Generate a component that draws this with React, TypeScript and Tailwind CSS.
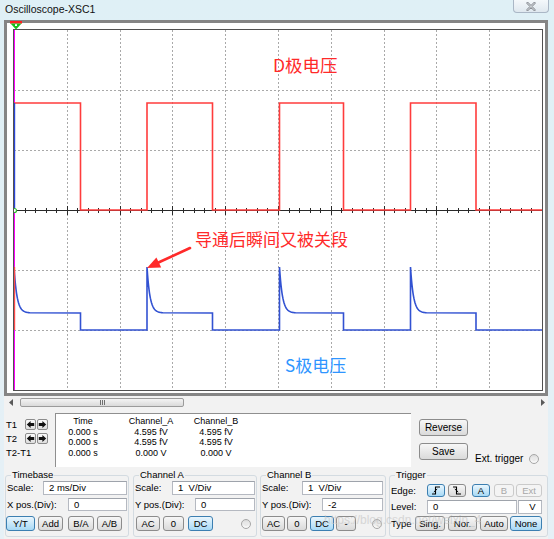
import React from "react";

type BtnProps = { children?: React.ReactNode; className?: string; variant?: "normal" | "active" | "disabled" };

function Btn({ children, className = "", variant = "normal" }: BtnProps) {
  const v =
    variant === "active"
      ? "border-[#3c7fb1] bg-linear-to-b from-[#eaf6fd] to-[#a7d9f5] text-black"
      : variant === "disabled"
      ? "border-[#cacaca] bg-[#f4f4f4] text-[#a8a8a8]"
      : "border-[#8c8c8c] bg-linear-to-b from-[#f7f7f7] to-[#dadada] text-black";
  return (
    <div className={`flex shrink-0 items-center justify-center rounded-[3px] border text-[9.5px] leading-none ${v} ${className}`}>
      {children}
    </div>
  );
}

function Field({ value, className = "" }: { value: string; className?: string }) {
  return (
    <div className={`flex shrink-0 items-center border border-[#b5b9c1] border-t-[#9ea3ab] bg-white pl-[5px] text-[9.5px] leading-none text-black ${className}`}>
      {value}
    </div>
  );
}

function Radio({ className = "" }: { className?: string }) {
  return (
    <div className={`flex h-[10px] w-[10px] shrink-0 items-center justify-center rounded-full border border-[#a6a6a6] bg-linear-to-b from-[#dcdcdc] to-[#fbfbfb] ${className}`}>
      <div className="h-[4px] w-[4px] rounded-full bg-[#e9e9e9]" />
    </div>
  );
}

function ArrowBtn({ dir }: { dir: "l" | "r" }) {
  return (
    <div className="flex h-[11px] w-[11px] items-center justify-center rounded-[2px] border border-[#8c8c8c] bg-linear-to-b from-[#fafafa] to-[#dedede]">
      <svg width="9" height="9" viewBox="0 0 9 9">
        {dir === "l" ? (
          <path d="M0.8 4.5 L4.6 0.9 L4.6 3.1 L8.2 3.1 L8.2 5.9 L4.6 5.9 L4.6 8.1 Z" fill="#111" />
        ) : (
          <path d="M8.2 4.5 L4.4 0.9 L4.4 3.1 L0.8 3.1 L0.8 5.9 L4.4 5.9 L4.4 8.1 Z" fill="#111" />
        )}
      </svg>
    </div>
  );
}

function bluePath() {
  const rises = [0, 133, 265.5, 396.5];
  const falls = [66.5, 198.5, 329.5, 462];
  let d = "";
  rises.forEach((r, i) => {
    if (i === 0) d += `M${r},237`;
    else d += ` L${r},300 L${r},237`;
    for (let t = 0.5; t <= 16; t += 0.5) d += ` L${(r + t).toFixed(2)},${(283 - 46 * Math.exp(-t / 3)).toFixed(2)}`;
    d += ` L${falls[i]},283 L${falls[i]},300`;
  });
  d += " L528,300";
  return d;
}

const redPath =
  "M0,73 H66.5 V180 H133 V73 H198.5 V180 H265.5 V73 H329.5 V180 H396.5 V73 H462 V180 H528";

function Plot() {
  const vx = Array.from({ length: 9 }, (_, i) => Math.round(52.8 * (i + 1)) + 0.5);
  const hy = [60.5, 120.5, 240.5, 300.5];
  const ticks = Array.from({ length: 51 }, (_, i) => i);
  return (
    <svg width="528" height="360" viewBox="0 0 528 360" className="block">
      <rect width="528" height="360" fill="#ffffff" />
      {vx.map((x) => (
        <line key={`v${x}`} x1={x} x2={x} y1={0} y2={360} stroke="#a9a9a9" strokeWidth="1" strokeDasharray="2 2" />
      ))}
      {hy.map((y) => (
        <line key={`h${y}`} x1={0} x2={528} y1={y} y2={y} stroke="#a9a9a9" strokeWidth="1" strokeDasharray="2 2" />
      ))}
      <line x1={0} x2={528} y1={180.5} y2={180.5} stroke="#2a2a2a" strokeWidth="1" />
      {ticks.map((i) => {
        const x = Math.round(i * 10.56) + 0.5;
        const major = i % 5 === 0;
        return <line key={`t${i}`} x1={x} x2={x} y1={major ? 176 : 178} y2={major ? 185 : 183} stroke="#2a2a2a" strokeWidth="1" />;
      })}
      <line x1={0.5} x2={0.5} y1={0} y2={360} stroke="#ff00ff" strokeWidth="1" />
      <path d={redPath} fill="none" stroke="#ff3c3c" strokeWidth="1.6" />
      <path d={bluePath()} fill="none" stroke="#3252d2" strokeWidth="1.6" />
      <line x1={0.6} x2={0.6} y1={73} y2={180} stroke="#2b45d8" strokeWidth="1.2" />
      <line x1={0.6} x2={0.6} y1={237} y2={300} stroke="#ff4a4a" strokeWidth="1.2" />
      <circle cx={0.5} cy={180.5} r={2} fill="#ffffff" stroke="#2fc02f" strokeWidth="1.2" />
      <text x={259} y={42} fontFamily="'Noto Sans CJK SC', sans-serif" fontSize="17.5" fill="#ff2a2a">
        D极电压
      </text>
      <text x={181} y={216} fontFamily="'Noto Sans CJK SC', sans-serif" fontSize="17" fill="#ff2a2a">
        导通后瞬间又被关段
      </text>
      <text x={271} y={342} fontFamily="'Noto Sans CJK SC', sans-serif" fontSize="17" fill="#2f95ff">
        S极电压
      </text>
      <line x1={176} y1={218} x2={145} y2={232.3} stroke="#ff2a2a" strokeWidth="2.6" strokeLinecap="round" />
      <polygon points="133,238 142.4,227.6 147.2,237.4" fill="#ff2a2a" />
    </svg>
  );
}

export default function App() {
  return (
    <div className="flex h-[539px] w-[554px] flex-col overflow-hidden bg-linear-to-b from-[#dff0f6] to-[#e6f0f6] font-['Liberation_Sans',Arial,sans-serif] text-black">
      {/* title bar */}
      <div className="flex h-[20px] shrink-0 items-start justify-between">
        <div className="pl-[5px] pt-[3px] text-[10.5px] leading-[13px] text-[#111]">Oscilloscope-XSC1</div>
        <div className="mr-[5px] flex h-[13px] w-[36px] items-center justify-center rounded-b-[4px] border border-t-0 border-[#aab7c6] bg-linear-to-b from-[#f4f8fb] to-[#dfe8ef]">
          <svg width="10" height="9" viewBox="0 0 10 9">
            <path d="M1.5 1 L8.5 8 M8.5 1 L1.5 8" stroke="#8b8f96" strokeWidth="2.4" strokeLinecap="round" />
            <path d="M1.5 1 L8.5 8 M8.5 1 L1.5 8" stroke="#eef2f5" strokeWidth="0.8" strokeLinecap="round" />
          </svg>
        </div>
      </div>

      <div className="flex flex-1">
        <div className="w-[4px] shrink-0" />
        <div className="flex w-[544px] shrink-0 flex-col bg-[#f2f2f2]">
          {/* screen frame */}
          <div className="relative border-[3px] border-[#858585] bg-white pb-[2px] pl-[6px] pr-[2px] pt-[6px]">
            <div className="border border-[#505050]">
              <Plot />
            </div>
            <svg width="12" height="9" viewBox="0 0 12 9" className="absolute left-[3px] top-[-2px]">
              <rect x="0" y="0" width="12" height="2.6" fill="#ff2020" />
              <polygon points="0.5,2.4 11.5,2.4 6,8.6" fill="#18c018" />
              <rect x="5" y="3.2" width="2" height="1.8" fill="#ffffff" />
            </svg>
          </div>

          {/* scrollbar */}
          <div className="flex h-[13px] shrink-0 items-center">
            <div className="flex w-[14px] justify-center">
              <svg width="4" height="7" viewBox="0 0 4 7">
                <path d="M4 0 L0 3.5 L4 7 Z" fill="#5a5a5a" />
              </svg>
            </div>
            <div className="ml-[2px] flex h-[9px] w-[164px] items-center justify-center rounded-[2px] border border-[#9b9b9b] bg-linear-to-b from-[#f4f4f4] to-[#dadada]">
              <div className="flex gap-[1px]">
                <div className="h-[5px] w-[1px] bg-[#707070]" />
                <div className="h-[5px] w-[1px] bg-[#707070]" />
                <div className="h-[5px] w-[1px] bg-[#707070]" />
              </div>
            </div>
            <div className="flex-1" />
            <div className="mr-[2px] flex w-[6px] justify-center">
              <svg width="4" height="7" viewBox="0 0 4 7">
                <path d="M0 0 L4 3.5 L0 7 Z" fill="#5a5a5a" />
              </svg>
            </div>
          </div>

          {/* measurement row */}
          <div className="flex h-[58px] shrink-0">
            <div className="flex w-[51px] shrink-0 flex-col pt-[10px] text-[9.5px] leading-none">
              <div className="flex h-[11px] items-center">
                <span className="w-[21px] pl-[2px]">T1</span>
                <ArrowBtn dir="l" />
                <div className="ml-[1px]">
                  <ArrowBtn dir="r" />
                </div>
              </div>
              <div className="mt-[3px] flex h-[11px] items-center">
                <span className="w-[21px] pl-[2px]">T2</span>
                <ArrowBtn dir="l" />
                <div className="ml-[1px]">
                  <ArrowBtn dir="r" />
                </div>
              </div>
              <div className="mt-[4px] flex h-[10px] items-center pl-[2px]">T2-T1</div>
            </div>
            <div className="mt-[4px] w-[356px] shrink-0 border-l border-t border-[#8f8f8f] bg-white pt-[2px] text-[9px] leading-[10.5px]">
              <div className="grid grid-cols-[54px_82px_48px] text-center">
                <div>Time</div>
                <div>Channel_A</div>
                <div>Channel_B</div>
                <div>0.000 s</div>
                <div>4.595 fV</div>
                <div>4.595 fV</div>
                <div>0.000 s</div>
                <div>4.595 fV</div>
                <div>4.595 fV</div>
                <div>0.000 s</div>
                <div>0.000 V</div>
                <div>0.000 V</div>
              </div>
            </div>
            <div className="ml-[8px] flex flex-col pt-[10px]">
              <Btn className="h-[17px] w-[49px] text-[10px]">Reverse</Btn>
              <Btn className="mt-[7px] h-[17px] w-[49px] text-[10px]">Save</Btn>
            </div>
            <div className="mb-[2px] ml-[7px] flex items-end">
              <div className="flex items-center">
                <span className="text-[10px] leading-[12px]">Ext. trigger</span>
                <Radio className="ml-[6px]" />
              </div>
            </div>
          </div>

          {/* group boxes */}
          <div className="relative flex shrink-0 pt-[2px] text-[9.5px] leading-none">
            {/* Timebase */}
            <fieldset className="ml-[1px] h-[68px] w-[124px] shrink-0 rounded-[3px] border border-[#d3dbe1]">
              <legend className="ml-[5px] px-[1px] text-[9.5px] leading-[12px]">Timebase</legend>
              <div className="flex h-[14px] items-center">
                <span className="w-[37px] pl-[1px]">Scale:</span>
                <Field value="2 ms/Div" className="h-[14px] w-[84px]" />
              </div>
              <div className="mt-[3px] flex h-[13px] items-center">
                <span className="w-[62px] pl-[1px]">X pos.(Div):</span>
                <Field value="0" className="h-[13px] w-[59px]" />
              </div>
              <div className="mt-[5px] flex h-[15px] items-center">
                <Btn variant="active" className="h-[15px] w-[29px]">Y/T</Btn>
                <Btn className="ml-[3px] h-[15px] w-[25px]">Add</Btn>
                <Btn className="ml-[5px] h-[15px] w-[26px]">B/A</Btn>
                <Btn className="ml-[3px] h-[15px] w-[25px]">A/B</Btn>
              </div>
            </fieldset>

            {/* Channel A */}
            <fieldset className="ml-[4px] h-[68px] w-[124px] shrink-0 rounded-[3px] border border-[#d3dbe1]">
              <legend className="ml-[5px] px-[1px] text-[9.5px] leading-[12px]">Channel A</legend>
              <div className="flex h-[14px] items-center">
                <span className="w-[38px] pl-[1px]">Scale:</span>
                <Field value="1  V/Div" className="h-[14px] w-[83px] whitespace-pre" />
              </div>
              <div className="mt-[3px] flex h-[13px] items-center">
                <span className="w-[61px] pl-[1px]">Y pos.(Div):</span>
                <Field value="0" className="h-[13px] w-[60px]" />
              </div>
              <div className="mt-[5px] flex h-[15px] items-center">
                <Btn className="ml-[2px] h-[15px] w-[24px]">AC</Btn>
                <Btn className="ml-[3px] h-[15px] w-[21px]">0</Btn>
                <Btn variant="active" className="ml-[4px] h-[15px] w-[25px]">DC</Btn>
                <Radio className="ml-[28px]" />
              </div>
            </fieldset>

            {/* Channel B */}
            <fieldset className="ml-[3px] h-[68px] w-[126px] shrink-0 rounded-[3px] border border-[#d3dbe1]">
              <legend className="ml-[5px] px-[1px] text-[9.5px] leading-[12px]">Channel B</legend>
              <div className="flex h-[14px] items-center">
                <span className="w-[41px] pl-[1px]">Scale:</span>
                <Field value="1  V/Div" className="h-[14px] w-[81px] whitespace-pre" />
              </div>
              <div className="mt-[3px] flex h-[13px] items-center">
                <span className="w-[61px] pl-[1px]">Y pos.(Div):</span>
                <Field value="-2" className="h-[13px] w-[61px]" />
              </div>
              <div className="mt-[5px] flex h-[15px] items-center">
                <Btn className="ml-[1px] h-[15px] w-[23px]">AC</Btn>
                <Btn className="ml-[2px] h-[15px] w-[20px]">0</Btn>
                <Btn variant="active" className="ml-[3px] h-[15px] w-[24px]">DC</Btn>
                <Btn className="ml-[2px] h-[15px] w-[20px]">-</Btn>
                <Radio className="ml-[16px]" />
              </div>
            </fieldset>

            {/* Trigger */}
            <fieldset className="ml-[3px] h-[68px] w-[159px] shrink-0 rounded-[3px] border border-[#d3dbe1]">
              <legend className="ml-[5px] px-[1px] text-[9.5px] leading-[12px]">Trigger</legend>
              <div className="mt-[3px] flex h-[13px] items-center">
                <span className="w-[37px] pl-[1px]">Edge:</span>
                <Btn variant="active" className="h-[13px] w-[18px]">
                  <svg width="10" height="9" viewBox="0 0 10 9">
                    <path d="M1 8 H4.5 V1 H9" fill="none" stroke="#000" strokeWidth="1.1" />
                    <path d="M2.8 6 L6.2 3" fill="none" stroke="#000" strokeWidth="1" />
                  </svg>
                </Btn>
                <Btn className="ml-[3px] h-[13px] w-[18px]">
                  <svg width="10" height="9" viewBox="0 0 10 9">
                    <path d="M1 1 H4.5 V8 H9" fill="none" stroke="#000" strokeWidth="1.1" />
                    <path d="M2.8 3 L6.2 6" fill="none" stroke="#000" strokeWidth="1" />
                  </svg>
                </Btn>
                <Btn variant="active" className="ml-[6px] h-[13px] w-[18px]">A</Btn>
                <Btn variant="disabled" className="ml-[4px] h-[13px] w-[20px]">B</Btn>
                <Btn variant="disabled" className="ml-[2px] h-[13px] w-[26px]">Ext</Btn>
              </div>
              <div className="mt-[3px] flex h-[14px] items-center">
                <span className="w-[37px] pl-[1px]">Level:</span>
                <Field value="0" className="h-[14px] w-[90px]" />
                <Field value="V" className="ml-[1px] h-[14px] w-[24px] justify-center pl-0" />
              </div>
              <div className="mt-[2px] flex h-[15px] items-center">
                <span className="w-[25px] pl-[1px]">Type</span>
                <Btn className="h-[15px] w-[30px]">Sing.</Btn>
                <Btn className="ml-[3px] h-[15px] w-[29px]">Nor.</Btn>
                <Btn className="ml-[3px] h-[15px] w-[28px]">Auto</Btn>
                <Btn variant="active" className="ml-[2px] h-[15px] w-[32px]">None</Btn>
              </div>
            </fieldset>

            <div className="pointer-events-none absolute left-[320px] top-[47px] text-[12px] leading-none text-[#c4c4c4] opacity-60">
              https://blog.csdn.net/weixin_4
            </div>
          </div>
        </div>
        <div className="flex-1" />
      </div>
    </div>
  );
}
